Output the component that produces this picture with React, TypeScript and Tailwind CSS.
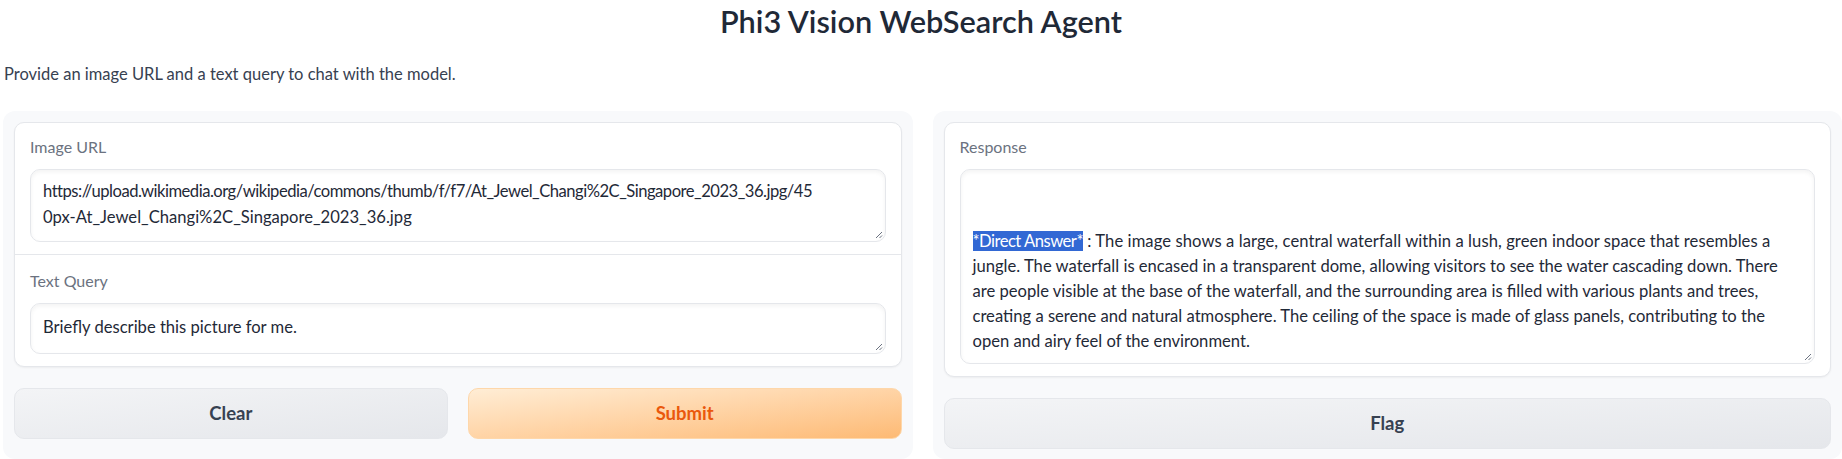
import type { ReactNode } from "react";

const responseLines = [
  "are people visible at the base of the waterfall, and the surrounding area is filled with various plants and trees,",
  "creating a serene and natural atmosphere. The ceiling of the space is made of glass panels, contributing to the",
  "open and airy feel of the environment.",
];

function Grip() {
  return (
    <svg className="absolute bottom-[2px] right-[2px]" width="8" height="8" viewBox="0 0 8 8" aria-hidden="true">
      <path d="M7 1L1 7M7 4.5L4.5 7" stroke="#6b7280" strokeWidth="1" fill="none" />
    </svg>
  );
}

function Field({ children, className = "" }: { children: ReactNode; className?: string }) {
  return (
    <div
      className={`relative rounded-[10px] border border-[#e5e7eb] bg-white px-[12px] text-[16.6px] leading-[25px] text-[#1f2937] shadow-[inset_0_2px_4px_rgba(0,0,0,0.05)] ${className}`}
    >
      {children}
      <Grip />
    </div>
  );
}

function Label({ children }: { children: ReactNode }) {
  return <div className="mb-[10px] text-[16px] leading-[25px] text-[#6b7280]">{children}</div>;
}

export default function App() {
  return (
    <div className="h-[459px] w-[1842px] overflow-hidden bg-white font-[family-name:Lato,sans-serif] text-[#1f2937]">
      <h1 className="pt-[3px] text-center text-[30.7px] font-semibold leading-[38px] text-[#1f2937]">
        Phi3 Vision WebSearch Agent
      </h1>
      <p className="mt-[21px] pl-[4px] text-[16.5px] leading-[25px] text-[#374151]">
        Provide an image URL and a text query to chat with the model.
      </p>

      <div className="mt-[24px] flex gap-[20px] pl-[3px]">
        <div className="flex w-[910px] flex-col gap-[21px] rounded-[12px] bg-[#f8f9fb] p-[11px] pb-[10px]">
          <div className="rounded-[10px] border border-[#e5e7eb] bg-white shadow-[0_1px_2px_rgba(0,0,0,0.05)]">
            <div className="px-[15px] pb-[12px] pt-[11px]">
              <Label>Image URL</Label>
              <Field className="h-[73px] pt-[8px] whitespace-nowrap">
                <div className="leading-[27px] tracking-[-0.5px]">
                  https://upload.wikimedia.org/wikipedia/commons/thumb/f/f7/At_Jewel_Changi%2C_Singapore_2023_36.jpg/45
                </div>
                <div className="leading-[25px]">0px-At_Jewel_Changi%2C_Singapore_2023_36.jpg</div>
              </Field>
            </div>
            <div className="border-t border-[#e5e7eb] px-[15px] pb-[12px] pt-[13px]">
              <Label>Text Query</Label>
              <Field className="h-[51px] pt-[12px]">
                <div className="-mt-[1px]">Briefly describe this picture for me.</div>
              </Field>
            </div>
          </div>
          <div className="flex gap-[20px]">
            <button className="h-[51px] flex-1 rounded-[10px] border border-[#e5e7eb] bg-gradient-to-br from-[#f3f4f6] to-[#e5e7eb] text-[18.5px] font-bold text-[#374151]">
              Clear
            </button>
            <button className="h-[51px] flex-1 rounded-[10px] border border-[#fed7aa] bg-gradient-to-br from-[#ffedd5] to-[#fdba74] text-[18.5px] font-bold text-[#ea580c]">
              Submit
            </button>
          </div>
        </div>

        <div className="flex w-[910px] flex-col gap-[21px] rounded-[12px] bg-[#f8f9fb] p-[11px] pb-[10px]">
          <div className="rounded-[10px] border border-[#e5e7eb] bg-white px-[15px] pb-[12px] pt-[11px] shadow-[0_1px_2px_rgba(0,0,0,0.05)]">
            <Label>Response</Label>
            <Field className="h-[195px] whitespace-nowrap pt-[9px]">
              <div>&nbsp;</div>
              <div>&nbsp;</div>
              <div className="tracking-[0.08px]">
                <span className="bg-[#3268d4] tracking-[-0.5px] text-white">*Direct Answer*</span> : The image shows a
                large, central waterfall within a lush, green indoor space that resembles a
              </div>
              <div>
                jungle. The waterfall is encased in a transparent dome, allowing visitors to see the water cascading down.
                There
              </div>
              {responseLines.map((line) => (
                <div key={line}>{line}</div>
              ))}
            </Field>
          </div>
          <button className="h-[51px] w-full rounded-[10px] border border-[#e5e7eb] bg-gradient-to-br from-[#f3f4f6] to-[#e5e7eb] text-[18.5px] font-bold text-[#374151]">
            Flag
          </button>
        </div>
      </div>
    </div>
  );
}
